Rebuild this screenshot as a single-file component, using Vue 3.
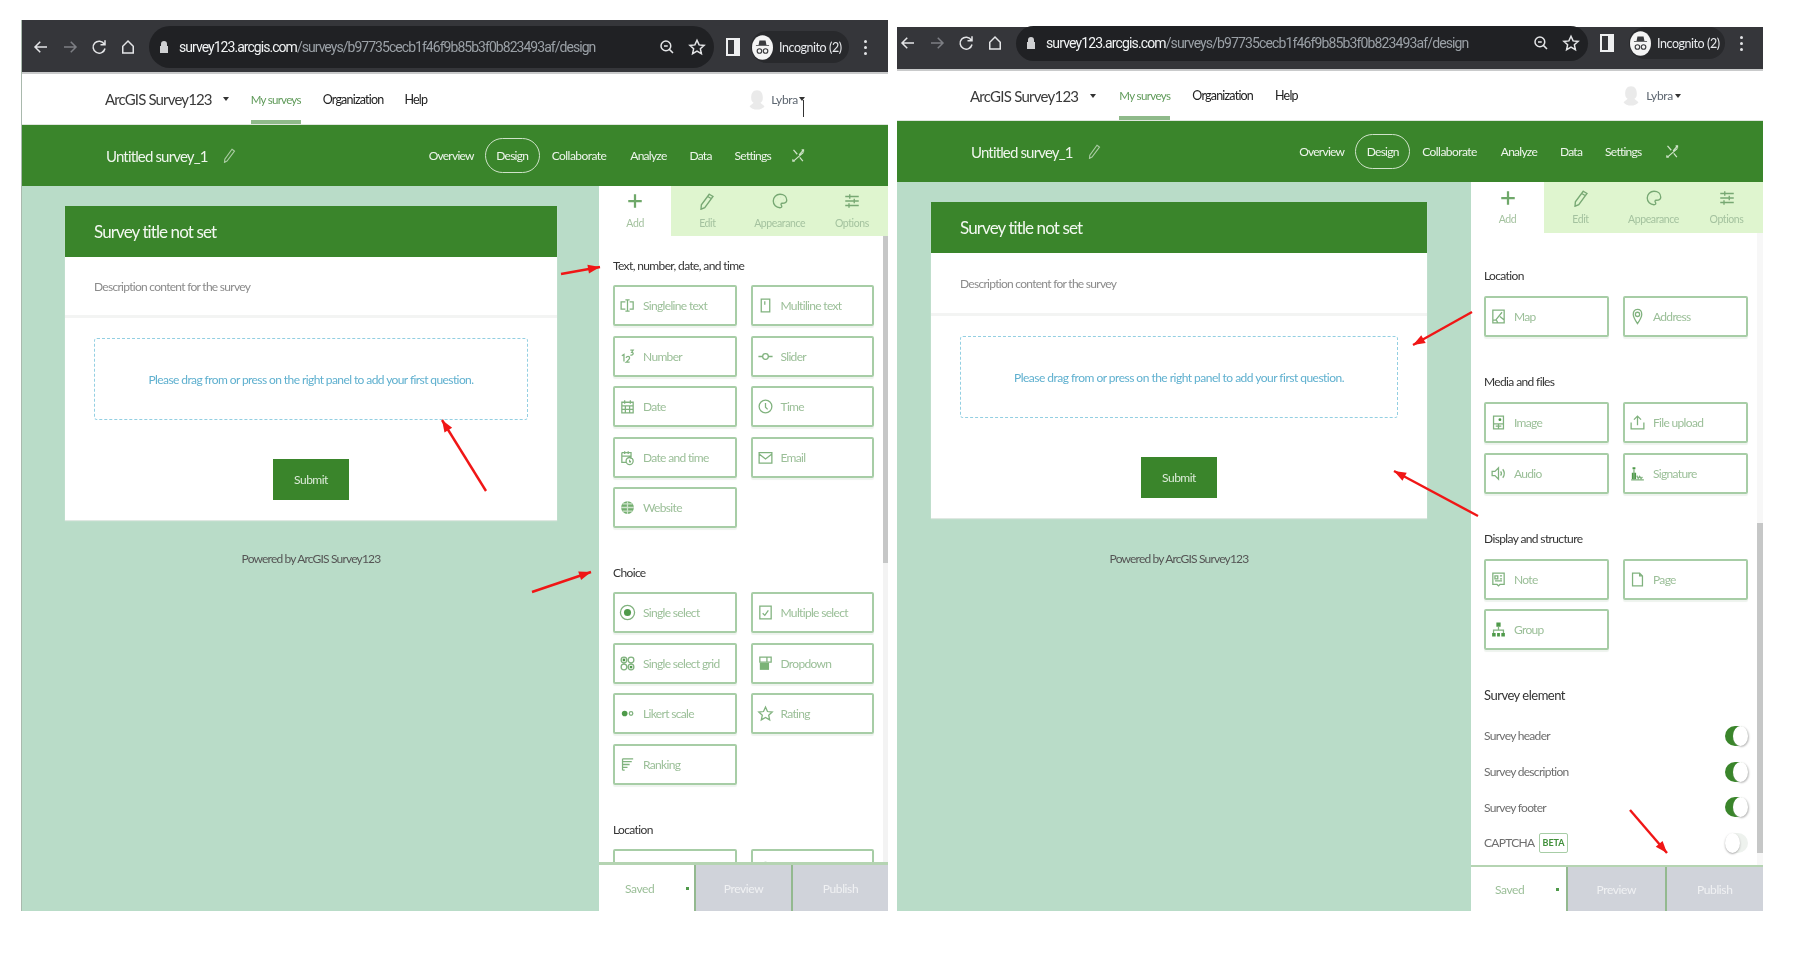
<script setup>
const paths = {
  single: { s: 'M9 7H3v10h6M15 7h5v10h-5M12 4v16M9 4h6M9 20h6' },
  multi: { s: 'M6 3h12v18H6zM11 6v5' },
  number: { s: 'M4 11l3-2v10M10 14c1-3 5-3 5 0 0 2-3 4-5 6h5M16 3h4l-2 3c3 0 3 5-2 4' },
  slider: { s: 'M2 12h6M16 12h6M8 12a4 4 0 108 0a4 4 0 10-8 0' },
  date: { s: 'M4 6h16v15H4zM4 11h16M4 16h16M9 11v10M15 11v10M8 3v5M16 3v5' },
  time: { s: 'M12 3a9 9 0 100 18a9 9 0 100-18M12 7v6l3 3' },
  datetime: { s: 'M4 5h13v9M4 5v14h6M4 10h13M8 3v4M13 3v4M15 12a5 5 0 100 10a5 5 0 100-10M15 15v3h2' },
  email: { s: 'M3 5h18v15H3zM3 7l9 7 9-7' },
  website: { s: 'M3 12h18M12 3v18M5 7h14M5 17h14', f: 'M12 3a9 9 0 100 18a9 9 0 100-18z', fo: 0.8, st: '#cfe3cc' },
  radio: { s: 'M12 2a10 10 0 100 20a10 10 0 100-20', f: 'M12 7a5 5 0 100 10a5 5 0 100-10z' },
  check: { s: 'M4 3h16v18H4zM8 13l3 3 5-7' },
  grid: { s: 'M7 3a4 4 0 100 8a4 4 0 100-8M17 3a4 4 0 100 8a4 4 0 100-8M7 13a4 4 0 100 8a4 4 0 100-8M17 13a4 4 0 100 8a4 4 0 100-8', f: 'M7 5a2 2 0 100 4a2 2 0 100-4zM17 15a2 2 0 100 4a2 2 0 100-4z' },
  dropdown: { s: 'M4 3h16v7H4zM14 3v7', f: 'M4 11h13v10H4z', fo: 0.75 },
  likert: { s: 'M17 9.500a2.500 2.500 0 100 5a2.500 2.500 0 100-5', f: 'M8 8a4 4 0 100 8a4 4 0 100-8z' },
  star: { s: 'M12 3l2.8 6.2 6.7.7-5 4.5 1.4 6.6-5.9-3.4L6.100 21l1.400-6.600-5-4.500 6.700-.7z' },
  ranking: { s: 'M5 4h15M5 8h13M5 12h10M5 16h7M5 20h3M5 4v16' },
  map: { s: 'M4 3h16v18H4zM8 17l9-11M4 17h5l2 4M14 12l6 5' },
  pin: { s: 'M12 2c5 0 6 4 6 7 0 4-4 10-6 13-2-3-6-9-6-13 0-3 1-7 6-7zM12 6a3 3 0 100 6a3 3 0 100-6' },
  image: { s: 'M5 3h14v18H5zM5 14h14M12 14v7M8 17h8', f: 'M14 6a2 2 0 100 4a2 2 0 100-4z' },
  upload: { s: 'M12 16V3M7 8l5-5 5 5M3 12v9h18v-9' },
  audio: { s: 'M3 9h4l5-5v16l-5-5H3zM15 9c1.500 2 1.500 4 0 6M18 6c3 4 3 8 0 12' },
  signature: { s: 'M3 21h18M7 6v15M11 15l2 4 2-3 2 3 2-2', f: 'M5 3h4v3H5zM4 11h6v9H4z' },
  note: { s: 'M4 3h16v16h-6l-2 2-2-2H4zM7 7h4v4H7zM14 7h3M14 11h3M7 14h10' },
  page: { s: 'M5 3h10l4 4v14H5zM15 3v4h4' },
  group: { s: 'M12 8v5M5 17v-4h14v4', f: 'M9 2h6v6H9zM3 17h5v5H3zM10 17h4v5h-4zM16 17h5v5h-5z' }
}
const tabIcons = {
  plus: { f: 'M10.500 3h3v7.500H21v3h-7.500V21h-3v-7.500H3v-3h7.500z' },
  pencil: { s: 'M15 3l5 3L9 21l-5 2 .5-6zM13 6l5 3' },
  palette: { s: 'M12 3c5 0 9 3 9 8 0 4-4 4-6 4-2 0-2 2-1 3 1 2 0 3-2 3-5 0-9-4-9-9s4-9 9-9zM8 8h.1M13 7h.1M17 10h.1M6 13h.1' },
  options: { s: 'M3 6h18M3 12h18M3 18h18M9 3v6M15 9v6M8 15v6' }
}
const tabs = [
  { label: 'Add', icon: 'plus', active: true },
  { label: 'Edit', icon: 'pencil' },
  { label: 'Appearance', icon: 'palette' },
  { label: 'Options', icon: 'options' }
]
const c = (label, icon) => ({ label, icon })
const sec = {
  text: { title: 'Text, number, date, and time', items: [c('Singleline text', 'single'), c('Multiline text', 'multi'), c('Number', 'number'), c('Slider', 'slider'), c('Date', 'date'), c('Time', 'time'), c('Date and time', 'datetime'), c('Email', 'email'), c('Website', 'website')] },
  choice: { title: 'Choice', items: [c('Single select', 'radio'), c('Multiple select', 'check'), c('Single select grid', 'grid'), c('Dropdown', 'dropdown'), c('Likert scale', 'likert'), c('Rating', 'star'), c('Ranking', 'ranking')] },
  location: { title: 'Location', items: [c('Map', 'map'), c('Address', 'pin')] },
  locationCut: { title: 'Location', items: [c('', 'map'), c('', 'pin')] },
  media: { title: 'Media and files', items: [c('Image', 'image'), c('File upload', 'upload'), c('Audio', 'audio'), c('Signature', 'signature')] },
  display: { title: 'Display and structure', items: [c('Note', 'note'), c('Page', 'page'), c('Group', 'group')] }
}
const shots = [
  { id: 'left', sections: [sec.text, sec.choice, sec.locationCut], elements: [] },
  { id: 'right', sections: [sec.location, sec.media, sec.display], elements: [
    { label: 'Survey header', on: true },
    { label: 'Survey description', on: true },
    { label: 'Survey footer', on: true },
    { label: 'CAPTCHA', on: false, beta: true }
  ] }
]
const navItems = ['Collaborate', 'Analyze', 'Data', 'Settings']
const arrows = [
  { x1: 561, y1: 274, x2: 600, y2: 267 },
  { x1: 486, y1: 491, x2: 442, y2: 420 },
  { x1: 532, y1: 592, x2: 591, y2: 572 },
  { x1: 1472, y1: 312, x2: 1413, y2: 345 },
  { x1: 1478, y1: 516, x2: 1394, y2: 471 },
  { x1: 1630, y1: 810, x2: 1667, y2: 853 }
]
const head = (a) => {
  const t = Math.atan2(a.y2 - a.y1, a.x2 - a.x1)
  const l = 12, w = 4.5
  const bx = a.x2 - l * Math.cos(t), by = a.y2 - l * Math.sin(t)
  const nx = -Math.sin(t) * w, ny = Math.cos(t) * w
  return `${a.x2},${a.y2} ${bx + nx},${by + ny} ${bx - nx},${by - ny}`
}
</script>

<template>
  <div class="page">
    <section v-for="shot in shots" :key="shot.id" class="shot" :class="shot.id">
      <div class="toolbar">
        <div class="nav-btns">
          <svg viewBox="0 0 24 24" class="tb"><path d="M20 12H5M11 5l-7 7 7 7" /></svg>
          <svg viewBox="0 0 24 24" class="tb dim"><path d="M4 12h15M13 5l7 7-7 7" /></svg>
          <svg viewBox="0 0 24 24" class="tb"><path d="M19 8a8 8 0 10 1 6M20 3v6h-6" /></svg>
          <svg viewBox="0 0 24 24" class="tb"><path d="M12 4l7 7v9H5v-9z" /></svg>
        </div>
        <div class="omni">
          <svg viewBox="0 0 12 14" class="lock"><path d="M3 6V4a3 3 0 016 0v2h1v7H2V6z" /></svg>
          <span class="url"><b>survey123.arcgis.com</b>/surveys/b97735cecb1f46f9b85b3f0b823493af/design</span>
          <svg viewBox="0 0 24 24" class="tb om-first"><path d="M10.500 4a6.500 6.500 0 100 13a6.500 6.500 0 100-13M15.500 15.500L20 20M8 10.500h5" /></svg>
          <svg viewBox="0 0 24 24" class="tb"><path d="M12 3l2.800 6.200 6.700.7-5 4.500 1.400 6.600-5.900-3.400L6.100 21l1.400-6.600-5-4.500 6.700-.7z" /></svg>
        </div>
        <svg viewBox="0 0 14 20" class="sidepanel"><path d="M0 1h14v18H0zM2 3v14h6V3z" fill-rule="evenodd" /></svg>
        <div class="pill">
          <svg viewBox="0 0 24 28" class="incog">
            <ellipse cx="12" cy="14" rx="12" ry="14" fill="#f4f4f4" />
            <path d="M8.500 6h7l1 5h3v1h-15v-1h3z" fill="#3a3b3e" />
            <circle cx="8.500" cy="18" r="2.600" fill="none" stroke="#3a3b3e" stroke-width="1.300" />
            <circle cx="15.500" cy="18" r="2.600" fill="none" stroke="#3a3b3e" stroke-width="1.300" />
          </svg>
          <span>Incognito (2)</span>
        </div>
        <div class="menu"><i></i><i></i><i></i></div>
      </div>

      <header class="appbar">
        <span class="brand">ArcGIS Survey123</span>
        <i class="caret"></i>
        <a class="link current">My surveys</a>
        <a class="link">Organization</a>
        <a class="link">Help</a>
        <div class="user">
          <svg viewBox="0 0 24 24" class="person"><path d="M12 1c5 0 7 4 7 9 0 3-1 5-3 6l5 4c-2 3-5 4-9 4s-7-1-9-4l5-4c-2-1-3-3-3-6 0-5 2-9 7-9z" /></svg>
          <span>Lybra</span>
          <i class="caret tiny"></i>
          <i v-if="shot.id === 'left'" class="cursor"></i>
        </div>
      </header>

      <div class="surveybar">
        <span class="s-title">Untitled survey_1</span>
        <svg viewBox="0 0 24 24" class="edit"><path d="M16 2l4 3L8 21l-4 2 .5-5z" /></svg>
        <nav class="s-nav">
          <a>Overview</a>
          <a class="design">Design</a>
          <a v-for="n in navItems" :key="n" :class="{ wide: n === 'Collaborate' }">{{ n }}</a>
          <svg viewBox="0 0 24 24" class="share"><path d="M4 3l6 7M20 3l-7 8M4 21l16-14M14 15l5 6M17 3h3v3M3 18v3h3" /></svg>
        </nav>
      </div>

      <div class="workspace">
        <main class="canvas">
          <article class="card">
            <div class="card-head">Survey title not set</div>
            <div class="card-desc">Description content for the survey</div>
            <div class="card-body">
              <div class="drop">Please drag from or press on the right panel to add your first question.</div>
              <button class="submit">Submit</button>
            </div>
          </article>
          <p class="powered">Powered by ArcGIS Survey123</p>
        </main>

        <aside class="panel">
          <div class="tabs">
            <div v-for="t in tabs" :key="t.label" class="tab" :class="{ active: t.active }">
              <svg viewBox="0 0 24 24" class="tab-ic">
                <path v-if="tabIcons[t.icon].f" :d="tabIcons[t.icon].f" class="solid" />
                <path v-if="tabIcons[t.icon].s" :d="tabIcons[t.icon].s" />
              </svg>
              <span>{{ t.label }}</span>
            </div>
          </div>
          <div class="body">
            <section v-for="s in shot.sections" :key="s.title" class="group">
              <h3>{{ s.title }}</h3>
              <div class="grid">
                <div v-for="it in s.items" :key="it.icon" class="item">
                  <svg viewBox="0 0 24 24" class="item-ic">
                    <path v-if="paths[it.icon].f" :d="paths[it.icon].f" class="solid" :fill-opacity="paths[it.icon].fo || 1" />
                    <path :d="paths[it.icon].s" :stroke="paths[it.icon].st" />
                  </svg>
                  <span v-if="it.label">{{ it.label }}</span>
                </div>
              </div>
            </section>
            <section v-if="shot.elements.length" class="group elements">
              <h3 class="big">Survey element</h3>
              <div v-for="e in shot.elements" :key="e.label" class="el-row">
                <span>{{ e.label }}</span>
                <em v-if="e.beta" class="beta">BETA</em>
                <span class="toggle" :class="{ on: e.on }"></span>
              </div>
            </section>
            <div class="scrollbar"><div class="thumb"></div></div>
          </div>
          <div class="foot">
            <div class="saved"><span>Saved</span><i></i></div>
            <div class="fbtn">Preview</div>
            <div class="fbtn">Publish</div>
          </div>
        </aside>
      </div>
    </section>

    <svg class="arrows" viewBox="0 0 1804 955">
      <g v-for="(a, i) in arrows" :key="i">
        <line :x1="a.x1" :y1="a.y1" :x2="a.x2" :y2="a.y2" />
        <polygon :points="head(a)" />
      </g>
    </svg>
  </div>
</template>

<style scoped>
.page {
  position: relative;
  width: 1804px;
  height: 955px;
  overflow: hidden;
  display: flex;
  align-items: flex-start;
  background: #fff;
  font-family: Lato, "Open Sans", sans-serif;
}
.shot {
  display: flex;
  flex-direction: column;
  width: 866px;
  filter: blur(0.4px);
}
.shot.left { margin: 20px 0 0 22px; height: 891px; box-shadow: -1px 0 0 #a9b9ad; }
.shot.right { margin: 27px 0 0 9px; height: 884px; }

/* browser toolbar */
.toolbar {
  display: flex;
  align-items: center;
  flex: none;
  background: #35363a;
  box-sizing: border-box;
  border-bottom: 2px solid #c9cacb;
}
.left .toolbar { height: 54px; padding: 2px 0 0 10px; }
.right .toolbar { height: 44px; padding-left: 2px; }
.right .nav-btns, .right .sidepanel, .right .pill, .right .menu { position: relative; top: -5px; }
.nav-btns { display: flex; gap: 11px; }
.tb { width: 18px; height: 18px; flex: none; fill: none; stroke: #e4e5e7; stroke-width: 2; }
.tb.dim { stroke: #7d7f84; }
.omni {
  display: flex;
  align-items: center;
  background: #202124;
  border-radius: 22px;
  box-sizing: border-box;
  padding: 0 8px 0 9px;
  margin-left: 12px;
}
.left .omni { width: 565px; height: 42px; }
.right .omni { width: 572px; height: 35px; margin-top: -10px; }
.lock { width: 12px; height: 14px; fill: #cfd0d2; flex: none; }
.url {
  margin-left: 9px;
  font-family: Roboto, sans-serif;
  font-size: 14px;
  letter-spacing: -0.96px;
  color: #9aa0a6;
  white-space: nowrap;
}
.right .url { letter-spacing: -0.87px; }
.url b { font-weight: 400; color: #f1f3f4; }
.om-first { margin-left: auto; margin-right: 12px; }
.sidepanel { width: 14px; height: 20px; margin-left: 12px; fill: #eeeff0; flex: none; }
.pill {
  display: flex;
  align-items: center;
  gap: 6px;
  height: 32px;
  border-radius: 16px;
  background: #28292c;
  color: #e8eaed;
  font-size: 12.500px;
  letter-spacing: -0.45px;
  white-space: nowrap;
  box-sizing: border-box;
}
.left .pill { width: 98px; margin-left: 11px; }
.right .pill { width: 96px; margin-left: 15px; }
.incog { width: 21px; height: 27px; flex: none; margin-left: 1px; }
.menu { display: flex; flex-direction: column; gap: 3px; margin-left: 15px; }
.menu i { width: 3px; height: 3px; background: #e3e4e6; border-radius: 50%; }

/* app bar */
.appbar {
  display: flex;
  align-items: center;
  flex: none;
  height: 51px;
  background: #fff;
  box-sizing: border-box;
  border-bottom: 1px solid #dfe6dd;
}
.left .appbar { padding-left: 83px; }
.right .appbar { height: 50px; padding-left: 73px; }
.brand { font-size: 15px; letter-spacing: -0.85px; color: #3a3a3a; white-space: nowrap; }
.right .brand { letter-spacing: -0.75px; }
.caret {
  width: 0; height: 0;
  border: 3px solid transparent;
  border-top: 4px solid #333;
  border-bottom: 0;
  margin: 0 22px 0 11px;
}
.right .appbar > .caret { margin: 0 23px 0 12px; }
.link {
  font-size: 12.500px;
  letter-spacing: -0.8px;
  color: #222;
  margin-right: 21px;
  white-space: nowrap;
  align-self: stretch;
  display: flex;
  align-items: center;
  box-sizing: border-box;
  border-bottom: 4px solid transparent;
  border-top: 4px solid transparent;
}
.right .link { margin-right: 22px; }
.link.current { font-size: 11.500px; letter-spacing: -0.72px; color: #5f9a59; border-bottom-color: #8fba8a; margin-right: 22px; }
.right .link.current { letter-spacing: -0.62px; }
.user {
  position: relative;
  display: flex;
  align-items: center;
  margin-left: auto;
  gap: 4px;
  font-size: 12px;
  letter-spacing: -0.3px;
  color: #5d6670;
}
.left .user { margin-right: 83px; }
.right .user { margin-right: 82px; gap: 5px; }
.person { width: 20px; height: 23px; fill: #eaeaea; }
.caret.tiny { margin: 0 0 0 -3px; }
.cursor {
  position: absolute;
  right: 1px;
  top: 12px;
  width: 1px;
  height: 17px;
  background: #333;
}

/* survey bar */
.surveybar {
  display: flex;
  align-items: center;
  flex: none;
  background: #3a852b;
  color: #eef5ec;
}
.left .surveybar { height: 61px; padding-left: 84px; }
.right .surveybar { height: 61px; padding-left: 74px; }
.s-title { font-size: 15px; letter-spacing: -0.85px; white-space: nowrap; }
.edit { width: 15px; height: 15px; margin-left: 14px; fill: none; stroke: #a9cba2; stroke-width: 1.800; }
.s-nav {
  display: flex;
  align-items: center;
  gap: 23px;
  margin-left: auto;
  font-size: 12px;
  letter-spacing: -0.75px;
  white-space: nowrap;
}
.left .s-nav { margin-right: 82px; }
.right .s-nav { margin-right: 83px; }
.wide { letter-spacing: -0.55px; margin-right: 1px; }
.design {
  height: 35px;
  width: 55px;
  box-sizing: border-box;
  border: 1.500px solid #cfe3c9;
  border-radius: 18px;
  display: flex;
  align-items: center;
  justify-content: center;
  margin: 0 -11px 0 -12px;
}
.share { width: 15px; height: 15px; fill: none; stroke: #cfe3c9; stroke-width: 2; margin-left: -3px; }
.right .share { margin-left: 0.5px; }

/* workspace */
.workspace { display: flex; flex: 1; min-height: 0; }
.canvas { flex: 1; min-width: 0; background: #b9dcc8; padding-top: 20px; }
.left .canvas { padding-left: 43px; }
.right .canvas { padding-left: 34px; }
.left .card, .left .powered { width: 492px; }
.right .card, .right .powered { width: 496px; }
.card { background: #fff; box-shadow: 0 1px 1px #dfe8e2; }
.card-head {
  height: 51px;
  display: flex;
  align-items: center;
  padding-left: 29px;
  background: #3a852b;
  color: #f3f8f1;
  font-size: 17px;
  letter-spacing: -0.9px;
}
.card-desc {
  height: 61px;
  padding: 21px 0 0 29px;
  box-sizing: border-box;
  font-size: 12px;
  line-height: 18px;
  letter-spacing: -0.72px;
  color: #8b8b8b;
  border-bottom: 3px solid #f3f4f3;
}
.right .card-desc { height: 63px; padding-top: 22px; }
.card-body { padding: 20px 29px 20px; display: flex; flex-direction: column; align-items: center; }
.drop {
  align-self: stretch;
  height: 82px;
  box-sizing: border-box;
  border: 1.500px dashed #93cfe2;
  border-radius: 3px;
  display: flex;
  align-items: center;
  justify-content: center;
  color: #5fb0cf;
  font-size: 12px;
  letter-spacing: -0.59px;
}
.right .drop { letter-spacing: -0.52px; }
.submit {
  margin-top: 39px;
  width: 76px;
  height: 41px;
  border: 0;
  background: #3a852b;
  color: #dcebd8;
  font: inherit;
  font-size: 12px;
  letter-spacing: -0.5px;
  padding: 0;
}
.powered {
  margin: 30px 0 0;
  text-align: center;
  font-size: 12px;
  line-height: 18px;
  letter-spacing: -0.82px;
  color: #555;
}
.right .powered { margin-top: 32px; }

/* right panel */
.panel { display: flex; flex-direction: column; background: #fff; flex: none; }
.left .panel { width: 289px; }
.right .panel { width: 292px; }
.tabs { display: flex; flex: none; height: 50px; background: #dff5cf; }
.right .tabs { height: 51px; }
.tab {
  flex: 1;
  display: flex;
  flex-direction: column;
  align-items: center;
  padding-top: 6px;
  box-sizing: border-box;
  font-size: 10.500px;
  letter-spacing: -0.4px;
  color: #a4c29f;
}
.right .tab { padding-top: 7px; }
.tab.active { background: #fff; }
.tab-ic { width: 18px; height: 18px; fill: none; stroke: #77a873; stroke-width: 1.800; margin-bottom: 7px; }
.right .tab-ic { margin-bottom: 6px; }
.tab-ic .solid { fill: #6fa86a; stroke: none; }
.body { position: relative; flex: 1; min-height: 0; overflow: hidden; padding: 20px 14px 0; }
.right .body { padding: 34px 15px 0 13px; }
h3 {
  margin: 0 0 9px;
  font-size: 12px;
  line-height: 20px;
  font-weight: 400;
  letter-spacing: -0.63px;
  color: #333;
}
.right h3 { line-height: 18px; margin-bottom: 11px; }
.right h3.big { font-size: 13px; margin-bottom: 14px; letter-spacing: -0.5px; }
.group + .group { margin-top: 35px; }
.right .group + .group { margin-top: 36px; }
.grid { display: grid; grid-template-columns: 1fr 1fr; column-gap: 14px; row-gap: 9.500px; }
.item {
  height: 41px;
  box-sizing: border-box;
  display: flex;
  align-items: center;
  padding-left: 4px;
  border: 2px solid #a7cda6;
  border-bottom-width: 2.500px;
  border-radius: 2px;
  box-shadow: 0 2px 1px #eef3ee;
  font-size: 12px;
  letter-spacing: -0.67px;
  color: #9bbf98;
  white-space: nowrap;
}
.item-ic { width: 17px; height: 17px; margin-right: 7px; fill: none; stroke: #80b27e; stroke-width: 1.800; flex: none; }
.item-ic .solid { fill: #4f9a4a; stroke: none; }
.el-row {
  display: flex;
  align-items: center;
  height: 35.700px;
  font-size: 12px;
  letter-spacing: -0.7px;
  color: #6e6e6e;
}
.beta {
  margin-left: 5px;
  padding: 0 2px;
  height: 18px;
  line-height: 18px;
  border: 1.500px solid #a7cda6;
  border-radius: 2px;
  font-style: normal;
  font-weight: 700;
  font-size: 9px;
  letter-spacing: 0;
  color: #3f8f39;
}
.toggle {
  position: relative;
  margin-left: auto;
  width: 23px;
  height: 20px;
  border-radius: 10px;
  background: #eef2ee;
}
.toggle.on { background: #3a852b; }
.toggle::after {
  content: "";
  position: absolute;
  top: 0;
  left: 0;
  width: 15px;
  height: 20px;
  border-radius: 50%;
  background: #fff;
  box-shadow: 0 1px 2px #a9a9a9;
}
.toggle.on::after { left: 8px; box-shadow: 1px 1px 2px #b9b9b9; }
.scrollbar { position: absolute; top: 0; right: 0; bottom: 0; width: 5px; background: #f3f3f3; }
.right .scrollbar { width: 6px; background: #f7f7f7; }
.thumb { position: absolute; left: 0; right: 0; background: #c6c7c7; }
.left .thumb { top: 0; height: 327px; }
.right .thumb { top: 290px; height: 330px; }
.foot {
  display: flex;
  flex: none;
  height: 49px;
  box-sizing: border-box;
  border-top: 3px solid #b5d4b2;
  background: #fff;
}
.right .foot { height: 46px; border-top-width: 2px; }
.saved {
  width: 95px;
  flex: none;
  display: flex;
  align-items: center;
  box-sizing: border-box;
  padding-left: 26px;
  font-size: 12px;
  letter-spacing: -0.4px;
  color: #9bbf98;
}
.right .saved { padding-left: 24px; }
.saved i { width: 3px; height: 3px; background: #4f9a4a; margin-left: 32px; }
.fbtn {
  flex: 1;
  display: flex;
  align-items: center;
  justify-content: center;
  background: #d0d3da;
  border-left: 2px solid #93b98f;
  color: #f0f1f3;
  font-size: 12px;
  letter-spacing: -0.4px;
}

.arrows { position: absolute; inset: 0; width: 1804px; height: 955px; pointer-events: none; }
.arrows line { stroke: #f01616; stroke-width: 2.400; }
.arrows polygon { fill: #f01616; }
</style>

<style>
html, body { margin: 0; background: #fff; }
</style>
